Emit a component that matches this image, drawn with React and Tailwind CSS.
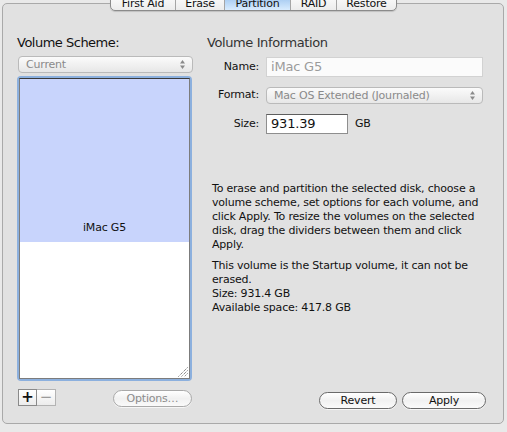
import React from 'react';

const tabs = [
  { label: 'First Aid', w: 'w-[64px]' },
  { label: 'Erase', w: 'w-[49px]' },
  { label: 'Partition', w: 'w-[66px]', active: true },
  { label: 'RAID', w: 'w-[46px]' },
  { label: 'Restore', w: 'w-[60px]' },
];

const PopupArrows = ({ color }) => (
  <svg width="7" height="11" viewBox="0 0 7 11">
    <path d="M3.5 1 L6 4.5 L1 4.5 Z" fill={color} />
    <path d="M1 6.5 L6 6.5 L3.5 10 Z" fill={color} />
  </svg>
);

const PillButton = ({ children, width, disabled }) => (
  <button
    className={`h-[17px] ${width} rounded-full border text-[11px] leading-none shadow-[0_1px_0_rgba(255,255,255,0.7)] bg-gradient-to-b from-white via-[#f1f1f1] to-[#fafafa] ${
      disabled ? 'border-[#a9a9a9] text-[#8c8c8c]' : 'border-[#6a6a6a] text-[#111]'
    }`}
  >
    {children}
  </button>
);

export default function App() {
  return (
    <div className="w-[507px] h-[432px] bg-[#e9e9e9] pt-[3px] pl-[2px] overflow-hidden font-['DejaVu_Sans',sans-serif] text-[#111] tracking-[-0.2px]">
      <div className="relative w-[502px] h-[421px] rounded-[5px] border border-[#a9a9a9] bg-[#e1e1e1] flex pl-[14px] pr-[16px] pb-[14px]">
        {/* tab strip */}
        <div className="absolute left-[107px] top-[-12px] flex h-[19px] rounded-b-[5px] border border-[#8b8b8b] overflow-hidden bg-gradient-to-b from-white to-[#ececec] shadow-[0_1px_1px_rgba(0,0,0,0.15)]">
          {tabs.map((t, i) => (
            <div
              key={t.label}
              className={`${t.w} flex items-end justify-center text-[11px] leading-[13px] ${i > 0 ? 'border-l border-[#a5a5a5]' : ''} ${
                t.active ? 'bg-gradient-to-b from-[#8fbbea] to-[#d9ecfe]' : ''
              }`}
            >
              {t.label}
            </div>
          ))}
        </div>

        {/* left column */}
        <div className="w-[176px] flex flex-col">
          <div className="mt-[31px] text-[13px] leading-[16px] tracking-[-0.5px]">Volume Scheme:</div>
          <div className="mt-[5px] ml-[1px] h-[17px] w-[175px] rounded-[4px] border border-[#bababa] bg-gradient-to-b from-[#fbfbfb] to-[#e7e7e7] flex items-center justify-between pl-[7px] pr-[6px] text-[11px] text-[#8a8a8a]">
            <span className="translate-y-[1px]">Current</span>
            <PopupArrows color="#8a8a8a" />
          </div>
          <div className="mt-[3px] h-[305px] w-[175px] rounded-[4px] bg-[#8cb0de] p-[2px]">
            <div className="relative h-full border border-[#7c7c7c] border-t-[#3c3c3c] bg-white flex flex-col">
              <div className="h-[163px] bg-[#c8d4fc] flex items-end justify-center pb-[6px] text-[11px]">iMac G5</div>
              <svg className="absolute right-[1px] bottom-[1px]" width="11" height="11" viewBox="0 0 11 11">
                <g stroke="#555" strokeWidth="1" strokeDasharray="1 1">
                  <path d="M10.5 1.5 L1.5 10.5" />
                  <path d="M10.5 4.5 L4.5 10.5" />
                  <path d="M10.5 7.5 L7.5 10.5" />
                </g>
              </svg>
            </div>
          </div>
          <div className="mt-auto flex items-center">
            <div className="ml-[1px] flex">
              <div className="w-[19px] h-[17px] border border-[#8a8a8a] bg-gradient-to-b from-white to-[#ececec] flex items-center justify-center text-[15px] font-bold leading-none">+</div>
              <div className="w-[19px] h-[17px] border border-l-0 border-[#b3b3b3] bg-gradient-to-b from-white to-[#ececec] flex items-center justify-center text-[15px] leading-none text-[#9a9a9a]">−</div>
            </div>
            <div className="ml-[57px]">
              <PillButton width="w-[79px]" disabled>Options…</PillButton>
            </div>
          </div>
        </div>

        {/* right column */}
        <div className="ml-[14px] flex-1 flex flex-col">
          <div className="mt-[31px] text-[13px] leading-[16px] tracking-[-0.4px] text-[#333]">Volume Information</div>

          <div className="mt-[6px] flex items-center">
            <div className="w-[52px] text-right text-[11px]">Name:</div>
            <div className="ml-[7px] h-[20px] w-[217px] border border-[#d2d2d2] bg-[#fbfbfb] pl-[4px] flex items-center text-[13px] text-[#9b9b9b]">
              iMac G5
            </div>
          </div>

          <div className="mt-[10px] flex items-center">
            <div className="w-[52px] text-right text-[11px]">Format:</div>
            <div className="ml-[7px] h-[17px] w-[217px] rounded-[4px] border border-[#bababa] bg-gradient-to-b from-[#fbfbfb] to-[#e7e7e7] flex items-center justify-between pl-[7px] pr-[6px] text-[11px] text-[#8a8a8a]">
              <span className="translate-y-[1px]">Mac OS Extended (Journaled)</span>
              <PopupArrows color="#8a8a8a" />
            </div>
          </div>

          <div className="mt-[10px] flex items-center">
            <div className="w-[52px] text-right text-[11px]">Size:</div>
            <div className="ml-[7px] h-[20px] w-[82px] border border-[#8e8e8e] border-t-[#5e5e5e] bg-white pl-[4px] flex items-center text-[13px]">
              931.39
            </div>
            <div className="ml-[7px] text-[11px]">GB</div>
          </div>

          <div className="mt-[48px] pl-[5px] w-[278px] text-[11px] leading-[14px]">
            <p>
              To erase and partition the selected disk, choose a volume scheme, set options for each volume, and click Apply. To resize the
              volumes on the selected disk, drag the dividers between them and click Apply.
            </p>
            <p className="mt-[7px]">
              This volume is the Startup volume, it can not be erased.
              <br />
              Size: 931.4 GB
              <br />
              Available space: 417.8 GB
            </p>
          </div>

          <div className="mt-auto flex justify-end gap-[5px] pr-[1px]">
            <PillButton width="w-[78px]">Revert</PillButton>
            <PillButton width="w-[84px]">Apply</PillButton>
          </div>
        </div>
      </div>
    </div>
  );
}
